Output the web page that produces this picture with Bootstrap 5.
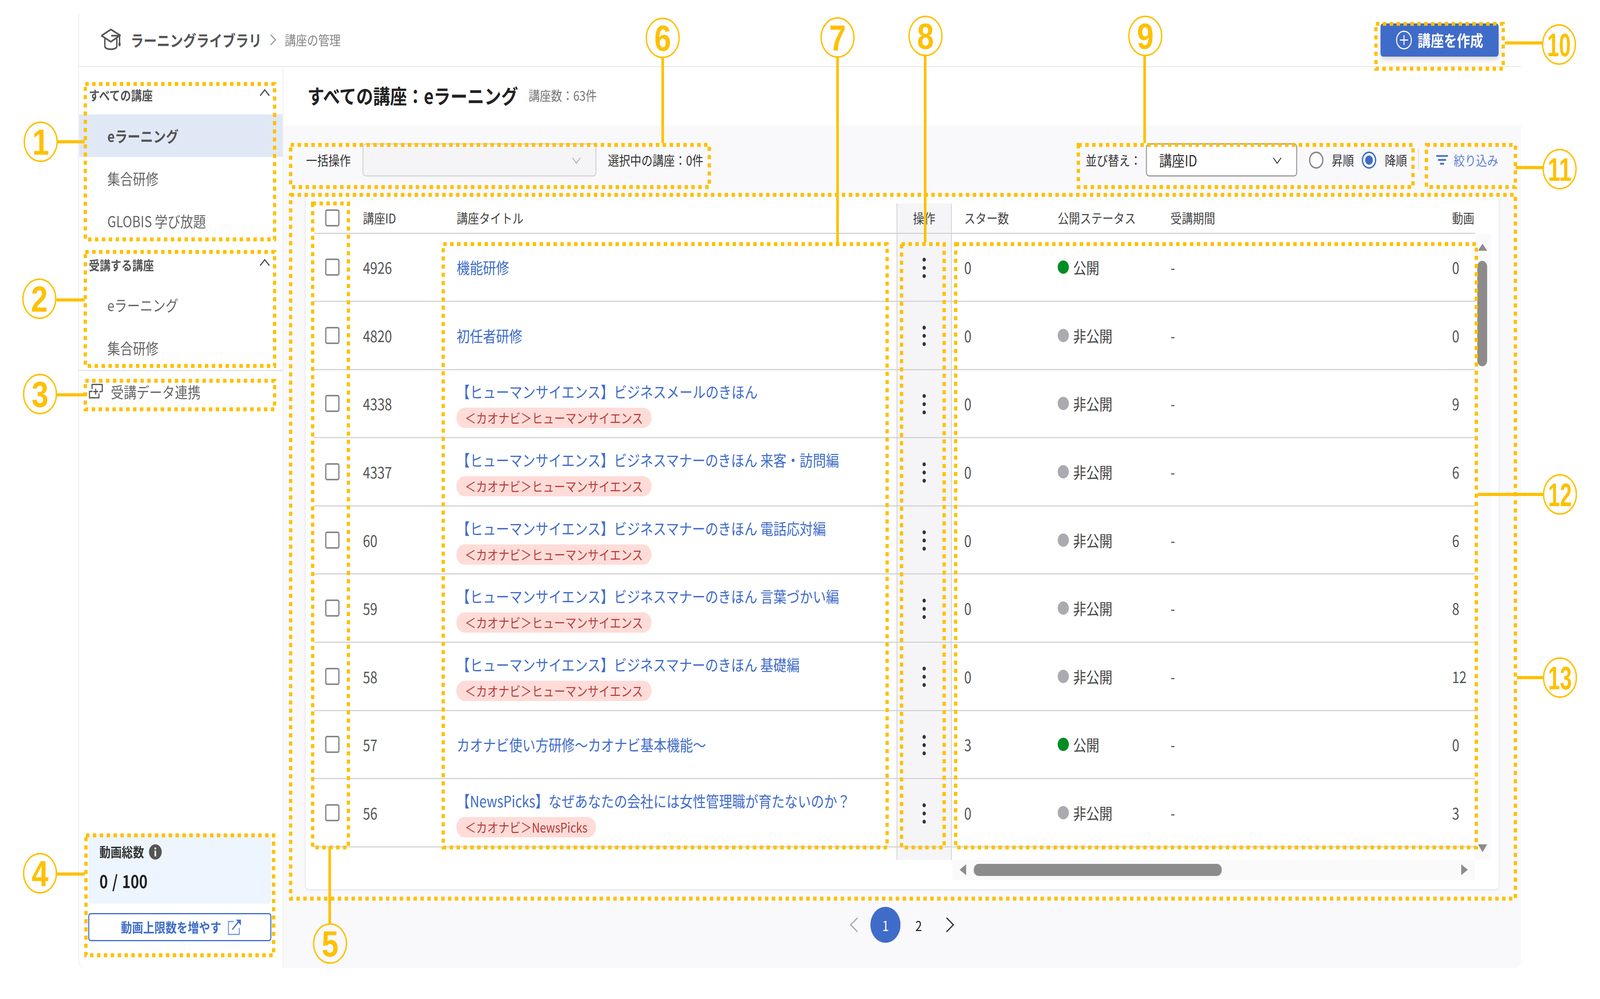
<!DOCTYPE html>
<html lang="ja">
<head>
<meta charset="utf-8">
<title>講座の管理</title>
<link href="https://cdn.jsdelivr.net/npm/bootstrap@5.3.0/dist/css/bootstrap.min.css" rel="stylesheet">
<style>
/* The layout is built at the reference's 4877px width. The render window measured 4096px wide,
   so .stage is squeezed horizontally by --fit-x (innerWidth / 4877; exactly 1 in a real 4877px window). */
html{overflow:hidden;background:#fff}
body{margin:0;background:#fff;width:100vw;height:100vh;overflow:hidden}
.stage{position:relative;width:4877px;height:2558px;transform-origin:0 0;transform:scaleX(var(--fit-x,1));font-family:"Noto Sans CJK JP","Noto Sans",sans-serif;font-size:34px;line-height:48px;color:#333}
.shell{position:absolute;left:238px;top:35px;width:4399px;height:2447px;border-left:3px solid #eee;border-bottom-left-radius:26px;border-bottom-right-radius:26px;overflow:hidden;background:#fff}
.topbar{height:137px;border-bottom:3px solid #ececec;padding-left:67px;padding-right:69px}
.crumb-main{font-size:40px;font-weight:700;color:#555;margin-left:27px;letter-spacing:0}
.crumb-sep{margin:0 26px 0 25px}
.crumb-sub{font-size:34px;color:#888}
.btn.create-btn{width:360px;height:85px;background:#406cc9;border:0;border-radius:8px;color:#fff;font-size:40px;font-weight:700;line-height:1;box-shadow:0 8px 14px rgba(0,0,0,.16);gap:17px;padding:0}
.content-row{height:2307px}
.side{width:623px;flex:none;border-right:3px solid #f0f0f0;background:#fff}
.side-head{height:121px;padding:47px 38px 0 30px;font-weight:700;color:#555;font-size:33px;line-height:48px}
.side-head.second{height:105px;padding-top:34px}
.side .nav-link{height:109px;padding:0 0 0 86px;font-size:39px;color:#666;line-height:109px}
.side .nav-link.on{background:#e0e8f6;font-weight:700;color:#555}
.side-list2 .nav-link{height:110px;line-height:110px}
.data-link{height:106px;margin-top:2px;border-top:3px solid #e2e2e2;padding-left:29px;font-size:39px;color:#666;gap:23px}
.vid-wrap{padding:0 34px 69px 28px;margin-top:auto}
.vid-box{height:178px;background:#edf5ff;border-radius:10px;padding:20px 34px}
.vid-title{font-weight:700;color:#333;gap:15px;height:50px}
.vid-num{font-size:44px;font-weight:700;color:#222;margin-top:24px;line-height:50px;word-spacing:3px}
.btn.vid-btn{margin-top:24px;height:72px;width:100%;background:#fff;border:3px solid #406cc9;border-radius:8px;color:#406cc9;font-size:34px;font-weight:700;padding:0 0 0 8px;gap:18px;line-height:1}
.main-pane{background:#f9f9fb}
.title-band{height:149px;background:#fff;padding-left:73px;padding-bottom:6px;gap:32px}
.title-band h1{font-size:51.5px;font-weight:700;color:#222;margin:0;line-height:60px}
.title-count{color:#777;font-size:34px}
.tools{height:181px;padding:46px 70px 0 69px;color:#333}
.tools .form-select{height:85px;font-size:39px;line-height:1;border-radius:10px;padding:0 0 0 37px;background-size:32px 32px;background-position:right 42px center;box-shadow:none}
.sel-bulk{width:713px;margin:0 35px 0 36px;background-color:#f5f5f7;border:3px solid #d4d4d8;background-image:url("data:image/svg+xml,%3csvg xmlns='http://www.w3.org/2000/svg' viewBox='0 0 16 16'%3e%3cpath fill='none' stroke='%23aaa' stroke-width='1.2' d='M2 5l6 7 6-7'/%3e%3c/svg%3e")}
.sel-sort{width:461px;margin:0 36px 0 14px;background-color:#fff;border:3px solid #999;color:#333;background-image:url("data:image/svg+xml,%3csvg xmlns='http://www.w3.org/2000/svg' viewBox='0 0 16 16'%3e%3cpath fill='none' stroke='%23333' stroke-width='1.3' d='M2 5l6 7 6-7'/%3e%3c/svg%3e")}
.tools .form-check-input{width:44px;height:44px;margin:0;background-color:#fff;border:4px solid #888;flex:none;box-shadow:none}
.tools .form-check-input:checked{border-color:#406cc9;background-image:radial-gradient(circle,#406cc9 0 45%,#fff 48%)}
.rlabel{margin:0 24px 0 25px}
.rlabel.last{margin-right:33px;margin-left:26px}
.tool-sep{width:3px;height:53px;background:#e4e4e8;margin-right:52px;margin-top:-5px}
.filter-txt{color:#5f82d4;margin-left:17px}
.tcard{width:3636px;height:1775px;margin-left:68px;background:#fff;border-radius:10px;box-shadow:0 2px 6px rgba(0,0,0,.1);padding:19px 0 0 25px;display:grid;grid-template-columns:3539px 49px;grid-template-rows:1680px 52px}
.table.course-table{table-layout:fixed;width:3539px;margin:0;border-collapse:separate;border-spacing:0;font-size:40px;color:#555}
.course-table th{height:77.5px;padding:0 0 0 14px;font-size:34px;font-weight:400;color:#444;vertical-align:middle;border-bottom:3px solid #d4d4d4;white-space:nowrap;overflow:hidden}
.course-table td{height:174.6px;padding:0 0 0 14px;vertical-align:middle;border-bottom:3px solid #d4d4d4}
.course-table th.checkcell,.course-table td.checkcell{padding-left:34px}
.course-table th.starcell,.course-table td.starcell{padding-left:38px}
.course-table .form-check-input{width:44px;height:44px;margin:0;display:block;border:4px solid #888;border-radius:6px;box-shadow:none}
.course-table a{color:#406cc9;text-decoration:none}
.course-table td.stack{padding-top:8px}
.course-table th.opcell,.course-table td.opcell{background:#f5f5f8;border-left:2px solid #ccc;border-right:2px solid #ccc;padding:0;text-align:center}
.course-table .fill td{height:32px;border-bottom:0}
.tag.badge{display:block;width:max-content;height:52px;margin:18px 0 0 -1px;padding:0 26px;background:#ffdcd8;color:#b83a3a;font-size:34px;font-weight:400;line-height:52px;border-radius:26px}
.st-dot{width:34px;height:34px;flex:none}
.dot-on{background:#008c25}
.dot-off{background:#aaaab0}
.stat{gap:13px;color:#444}
.vtrack{grid-column:2;grid-row:1;margin-top:78px;background:#fafafa;padding-top:25px}
.arrow-up{width:0;height:0;border-left:14px solid transparent;border-right:14px solid transparent;border-bottom:18px solid #8c8c8c;margin-left:-3px}
.arrow-down{width:0;height:0;border-left:14px solid transparent;border-right:14px solid transparent;border-top:20px solid #8c8c8c;margin-top:auto;margin-bottom:19px;margin-left:-3px}
.vthumb{width:30px;height:270px;background:#8c8c8c;border-radius:15px;margin:26px 0 0 -5px}
.htrack{grid-column:1;grid-row:2;margin-left:1946px;background:#fafafa;padding:0 22px;gap:23px}
.arrow-left{width:0;height:0;border-top:14px solid transparent;border-bottom:14px solid transparent;border-right:20px solid #8c8c8c}
.arrow-right{width:0;height:0;border-top:14px solid transparent;border-bottom:14px solid transparent;border-left:20px solid #8c8c8c;margin-left:auto}
.hthumb{width:756px;height:31px;background:#8c8c8c;border-radius:15px}
.pager-nav{margin-top:45px;margin-left:1726px}
.pager-nav .pagination{margin:0;align-items:center}
.pager-nav .page-link{background:transparent;border:0;padding:0;color:#222;font-size:36px;line-height:92px;width:92px;height:92px;text-align:center;border-radius:50%;box-shadow:none}
.pager-nav .page-item.active .page-link{background:#406cc9;color:#fff}
.pager-nav .arr .page-link{width:26px;height:40px;line-height:0}
.pg-prev{margin-right:38px}
.pg-two{margin-left:10px}
.pg-next{margin-left:38px}
.marks{position:absolute;left:0;top:0;width:4877px;height:2558px;pointer-events:none}
.marks rect{fill:none;stroke:#FFC000;stroke-width:10;stroke-dasharray:10.5 10.5}
.marks line{stroke:#FFC000;stroke-width:8}
.marks circle{fill:none;stroke:#FFC000;stroke-width:4}
.marks text{fill:#FFC000;font-family:"Liberation Sans",sans-serif;font-weight:700;font-size:92px;text-anchor:middle}
.marks text.two{font-size:84px}
</style>
<script>document.documentElement.style.setProperty('--fit-x', Math.min(1, window.innerWidth / 4877));</script>
</head>
<body>
<div class="stage">
<div class="shell d-flex flex-column">
  <header class="topbar d-flex align-items-center justify-content-between flex-none">
    <div class="d-flex align-items-center">
      <svg width="63" height="60" viewBox="50 40 190 180" fill="none" stroke="#555" stroke-width="13" stroke-linejoin="round" stroke-linecap="round"><path d="M140 50L54 98l86 47 86-50z"/><path d="M85 125v55c0 30 110 30 110 0v-55"/><path d="M148 98h72v50"/><path d="M220 145c10 10 10 30 0 33c-10-3-10-23 0-33z" fill="#555" stroke-width="6"/></svg>
      <span class="crumb-main">ラーニングライブラリ</span>
      <svg class="crumb-sep" width="19" height="30" viewBox="0 0 19 30" fill="none" stroke="#999" stroke-width="3"><path d="M2 2l15 13L2 28"/></svg>
      <span class="crumb-sub">講座の管理</span>
    </div>
    <button type="button" class="btn create-btn d-flex align-items-center justify-content-center">
      <svg width="49" height="49" viewBox="0 0 49 49" fill="none" stroke="#fff" stroke-width="3"><circle cx="24.5" cy="24.5" r="22.5"/><path d="M24.5 12v25M12 24.5h25"/></svg>
      <span>講座を作成</span>
    </button>
  </header>
  <div class="content-row d-flex">
    <aside class="side d-flex flex-column">
      <div class="side-head d-flex justify-content-between"><span>すべての講座</span><svg class="mt-2" width="32" height="20" viewBox="0 0 32 20" fill="none" stroke="#555" stroke-width="3.5"><path d="M2 18L16 3l14 15"/></svg></div>
      <nav class="nav flex-column">
        <a class="nav-link on" href="#">eラーニング</a>
        <a class="nav-link" href="#">集合研修</a>
        <a class="nav-link" href="#">GLOBIS 学び放題</a>
      </nav>
      <div class="side-head second d-flex justify-content-between"><span>受講する講座</span><svg class="mt-2" width="32" height="20" viewBox="0 0 32 20" fill="none" stroke="#555" stroke-width="3.5"><path d="M2 18L16 3l14 15"/></svg></div>
      <nav class="nav flex-column side-list2">
        <a class="nav-link" href="#">eラーニング</a>
        <a class="nav-link" href="#">集合研修</a>
      </nav>
      <div class="data-link d-flex align-items-center">
        <svg width="45" height="40" viewBox="30 35 135 120" fill="none" stroke="#555" stroke-width="10" stroke-linecap="round" stroke-linejoin="round"><path d="M62 75V42h93v53l-22 4"/><path d="M62 95l-24 1v49h87v-30"/><path d="M95 78v38M76 97h38"/></svg>
        <span>受講データ連携</span>
      </div>
      <div class="vid-wrap">
        <div class="vid-box">
          <div class="vid-title d-flex align-items-center"><span>動画総数</span><svg width="39" height="39" viewBox="0 0 39 39"><circle cx="19.5" cy="19.5" r="19.5" fill="#555"/><rect x="17" y="16" width="5" height="15" fill="#fff"/><rect x="17" y="8" width="5" height="5" fill="#fff"/></svg></div>
          <div class="vid-num">0 / 100</div>
        </div>
        <a class="btn vid-btn d-flex align-items-center justify-content-center" href="#">
          <span>動画上限数を増やす</span>
          <svg width="43" height="43" viewBox="25 15 130 130" fill="none"><path d="M85 35H35v100h100V85" stroke="#7f9ee0" stroke-width="10"/><path d="M70 97l55-57" stroke="#406cc9" stroke-width="10"/><path d="M105 20h45v45z" fill="#406cc9"/></svg>
        </a>
      </div>
    </aside>
    <main class="main-pane flex-grow-1">
      <div class="title-band d-flex align-items-center">
        <h1>すべての講座：eラーニング</h1>
        <span class="title-count">講座数：63件</span>
      </div>
      <div class="tools d-flex align-items-start">
        <div class="d-flex align-items-center">
          <span>一括操作</span>
          <select class="form-select sel-bulk" aria-label="一括操作"><option></option></select>
          <span>選択中の講座：0件</span>
        </div>
        <div class="d-flex align-items-center ms-auto">
          <span>並び替え：</span>
          <select class="form-select sel-sort" aria-label="並び替え"><option>講座ID</option></select>
          <input class="form-check-input" type="radio" name="ord" aria-label="昇順"><span class="rlabel">昇順</span>
          <input class="form-check-input" type="radio" name="ord" checked aria-label="降順"><span class="rlabel last">降順</span>
          <div class="tool-sep"></div>
          <svg width="37" height="27" viewBox="25 28 110 80" fill="none" stroke="#406cc9" stroke-width="13" stroke-linecap="round"><path d="M32 38h96M49 68h62M67 97h26"/></svg>
          <span class="filter-txt">絞り込み</span>
        </div>
      </div>
      <section class="tcard">
        <div>
          <table class="table course-table">
            <colgroup><col style="width:135px"><col style="width:286px"><col style="width:1355px"><col style="width:168px"><col style="width:309px"><col style="width:344px"><col style="width:858px"><col style="width:84px"></colgroup>
            <thead><tr>
              <th class="checkcell"><input class="form-check-input" type="checkbox" aria-label="すべて選択"></th><th>講座ID</th><th>講座タイトル</th><th class="opcell">操作</th><th class="starcell">スター数</th><th>公開ステータス</th><th>受講期間</th><th>動画</th>
            </tr></thead>
            <tbody>
              <tr><td class="checkcell"><input class="form-check-input" type="checkbox" aria-label="選択"></td><td>4926</td><td><a href="#">機能研修</a></td><td class="opcell"><svg width="12" height="54" viewBox="0 0 12 54" fill="#333"><circle cx="6" cy="6" r="5"/><circle cx="6" cy="27" r="5"/><circle cx="6" cy="48" r="5"/></svg></td><td class="starcell">0</td><td><span class="stat d-flex align-items-center"><span class="st-dot rounded-circle dot-on"></span>公開</span></td><td>-</td><td>0</td></tr>
              <tr><td class="checkcell"><input class="form-check-input" type="checkbox" aria-label="選択"></td><td>4820</td><td><a href="#">初任者研修</a></td><td class="opcell"><svg width="12" height="54" viewBox="0 0 12 54" fill="#333"><circle cx="6" cy="6" r="5"/><circle cx="6" cy="27" r="5"/><circle cx="6" cy="48" r="5"/></svg></td><td class="starcell">0</td><td><span class="stat d-flex align-items-center"><span class="st-dot rounded-circle dot-off"></span>非公開</span></td><td>-</td><td>0</td></tr>
              <tr><td class="checkcell"><input class="form-check-input" type="checkbox" aria-label="選択"></td><td>4338</td><td class="stack"><a href="#">【ヒューマンサイエンス】ビジネスメールのきほん</a><span class="badge tag">＜カオナビ＞ヒューマンサイエンス</span></td><td class="opcell"><svg width="12" height="54" viewBox="0 0 12 54" fill="#333"><circle cx="6" cy="6" r="5"/><circle cx="6" cy="27" r="5"/><circle cx="6" cy="48" r="5"/></svg></td><td class="starcell">0</td><td><span class="stat d-flex align-items-center"><span class="st-dot rounded-circle dot-off"></span>非公開</span></td><td>-</td><td>9</td></tr>
              <tr><td class="checkcell"><input class="form-check-input" type="checkbox" aria-label="選択"></td><td>4337</td><td class="stack"><a href="#">【ヒューマンサイエンス】ビジネスマナーのきほん 来客・訪問編</a><span class="badge tag">＜カオナビ＞ヒューマンサイエンス</span></td><td class="opcell"><svg width="12" height="54" viewBox="0 0 12 54" fill="#333"><circle cx="6" cy="6" r="5"/><circle cx="6" cy="27" r="5"/><circle cx="6" cy="48" r="5"/></svg></td><td class="starcell">0</td><td><span class="stat d-flex align-items-center"><span class="st-dot rounded-circle dot-off"></span>非公開</span></td><td>-</td><td>6</td></tr>
              <tr><td class="checkcell"><input class="form-check-input" type="checkbox" aria-label="選択"></td><td>60</td><td class="stack"><a href="#">【ヒューマンサイエンス】ビジネスマナーのきほん 電話応対編</a><span class="badge tag">＜カオナビ＞ヒューマンサイエンス</span></td><td class="opcell"><svg width="12" height="54" viewBox="0 0 12 54" fill="#333"><circle cx="6" cy="6" r="5"/><circle cx="6" cy="27" r="5"/><circle cx="6" cy="48" r="5"/></svg></td><td class="starcell">0</td><td><span class="stat d-flex align-items-center"><span class="st-dot rounded-circle dot-off"></span>非公開</span></td><td>-</td><td>6</td></tr>
              <tr><td class="checkcell"><input class="form-check-input" type="checkbox" aria-label="選択"></td><td>59</td><td class="stack"><a href="#">【ヒューマンサイエンス】ビジネスマナーのきほん 言葉づかい編</a><span class="badge tag">＜カオナビ＞ヒューマンサイエンス</span></td><td class="opcell"><svg width="12" height="54" viewBox="0 0 12 54" fill="#333"><circle cx="6" cy="6" r="5"/><circle cx="6" cy="27" r="5"/><circle cx="6" cy="48" r="5"/></svg></td><td class="starcell">0</td><td><span class="stat d-flex align-items-center"><span class="st-dot rounded-circle dot-off"></span>非公開</span></td><td>-</td><td>8</td></tr>
              <tr><td class="checkcell"><input class="form-check-input" type="checkbox" aria-label="選択"></td><td>58</td><td class="stack"><a href="#">【ヒューマンサイエンス】ビジネスマナーのきほん 基礎編</a><span class="badge tag">＜カオナビ＞ヒューマンサイエンス</span></td><td class="opcell"><svg width="12" height="54" viewBox="0 0 12 54" fill="#333"><circle cx="6" cy="6" r="5"/><circle cx="6" cy="27" r="5"/><circle cx="6" cy="48" r="5"/></svg></td><td class="starcell">0</td><td><span class="stat d-flex align-items-center"><span class="st-dot rounded-circle dot-off"></span>非公開</span></td><td>-</td><td>12</td></tr>
              <tr><td class="checkcell"><input class="form-check-input" type="checkbox" aria-label="選択"></td><td>57</td><td><a href="#">カオナビ使い方研修〜カオナビ基本機能〜</a></td><td class="opcell"><svg width="12" height="54" viewBox="0 0 12 54" fill="#333"><circle cx="6" cy="6" r="5"/><circle cx="6" cy="27" r="5"/><circle cx="6" cy="48" r="5"/></svg></td><td class="starcell">3</td><td><span class="stat d-flex align-items-center"><span class="st-dot rounded-circle dot-on"></span>公開</span></td><td>-</td><td>0</td></tr>
              <tr><td class="checkcell"><input class="form-check-input" type="checkbox" aria-label="選択"></td><td>56</td><td class="stack"><a href="#">【NewsPicks】なぜあなたの会社には女性管理職が育たないのか？</a><span class="badge tag">＜カオナビ＞NewsPicks</span></td><td class="opcell"><svg width="12" height="54" viewBox="0 0 12 54" fill="#333"><circle cx="6" cy="6" r="5"/><circle cx="6" cy="27" r="5"/><circle cx="6" cy="48" r="5"/></svg></td><td class="starcell">0</td><td><span class="stat d-flex align-items-center"><span class="st-dot rounded-circle dot-off"></span>非公開</span></td><td>-</td><td>3</td></tr>
              <tr class="fill"><td></td><td></td><td></td><td class="opcell"></td><td></td><td></td><td></td><td></td></tr>
            </tbody>
          </table>
        </div>
        <div class="vtrack d-flex flex-column align-items-center">
          <div class="arrow-up"></div>
          <div class="vthumb"></div>
          <div class="arrow-down"></div>
        </div>
        <div class="htrack d-flex align-items-center">
          <div class="arrow-left"></div>
          <div class="hthumb"></div>
          <div class="arrow-right"></div>
        </div>
      </section>
      <nav class="pager-nav" aria-label="ページ">
        <ul class="pagination">
          <li class="page-item arr pg-prev"><a class="page-link" href="#" aria-label="前へ"><svg width="26" height="40" viewBox="0 0 26 40" fill="none" stroke="#aaa" stroke-width="3.5"><path d="M24 2L3 20l21 18"/></svg></a></li>
          <li class="page-item active"><a class="page-link" href="#">1</a></li>
          <li class="page-item pg-two"><a class="page-link" href="#">2</a></li>
          <li class="page-item arr pg-next"><a class="page-link" href="#" aria-label="次へ"><svg width="26" height="40" viewBox="0 0 26 40" fill="none" stroke="#333" stroke-width="3.5"><path d="M2 2l21 18L2 38"/></svg></a></li>
        </ul>
      </nav>
    </main>
  </div>
</div>
<svg class="marks" viewBox="0 0 4877 2558">
  <rect x="260" y="215" width="577" height="398"/>
  <rect x="260" y="645" width="577" height="292"/>
  <rect x="260" y="975" width="577" height="73"/>
  <rect x="262" y="2139" width="572" height="307"/>
  <rect x="953" y="521" width="109" height="1649"/>
  <rect x="886" y="371" width="1276" height="108"/>
  <rect x="1351" y="625" width="1353" height="1545"/>
  <rect x="2748" y="625" width="130" height="1545"/>
  <rect x="2913" y="625" width="1587" height="1545"/>
  <rect x="3287" y="371" width="1020" height="108"/>
  <rect x="4194" y="61" width="388" height="115"/>
  <rect x="4348" y="371" width="271" height="108"/>
  <rect x="886" y="499" width="3733" height="1802"/>
  <line x1="175" y1="363" x2="258" y2="363"/>
  <line x1="172" y1="768" x2="258" y2="768"/>
  <line x1="173" y1="1011" x2="258" y2="1011"/>
  <line x1="173" y1="2238" x2="258" y2="2238"/>
  <line x1="1005" y1="2170" x2="1005" y2="2365"/>
  <line x1="2020" y1="148" x2="2020" y2="366"/>
  <line x1="2553" y1="147" x2="2553" y2="620"/>
  <line x1="2820" y1="144" x2="2820" y2="620"/>
  <line x1="3489" y1="144" x2="3489" y2="366"/>
  <line x1="4587" y1="110" x2="4701" y2="110"/>
  <line x1="4620" y1="429" x2="4703" y2="429"/>
  <line x1="4505" y1="1266" x2="4704" y2="1266"/>
  <line x1="4624" y1="1735" x2="4704" y2="1735"/>
  <circle cx="124" cy="363" r="50"/><text x="124" y="396">1</text>
  <circle cx="120" cy="765" r="50"/><text x="120" y="798">2</text>
  <circle cx="122" cy="1009" r="50"/><text x="122" y="1042">3</text>
  <circle cx="122" cy="2236" r="50"/><text x="122" y="2269">4</text>
  <circle cx="1006" cy="2416" r="50"/><text x="1006" y="2449">5</text>
  <circle cx="2020" cy="97" r="50"/><text x="2020" y="130">6</text>
  <circle cx="2553" cy="96" r="50"/><text x="2553" y="129">7</text>
  <circle cx="2821" cy="92" r="50"/><text x="2821" y="125">8</text>
  <circle cx="3491" cy="92" r="50"/><text x="3491" y="125">9</text>
  <circle cx="4752" cy="114" r="50"/><text class="two" x="4752" y="144" textLength="72" lengthAdjust="spacingAndGlyphs">10</text>
  <circle cx="4754" cy="433" r="50"/><text class="two" x="4754" y="463" textLength="72" lengthAdjust="spacingAndGlyphs">11</text>
  <circle cx="4755" cy="1266" r="50"/><text class="two" x="4755" y="1296" textLength="72" lengthAdjust="spacingAndGlyphs">12</text>
  <circle cx="4755" cy="1735" r="50"/><text class="two" x="4755" y="1765" textLength="72" lengthAdjust="spacingAndGlyphs">13</text>
</svg>
</div>
<script src="https://cdn.jsdelivr.net/npm/bootstrap@5.3.0/dist/js/bootstrap.bundle.min.js"></script>
</body>
</html>
